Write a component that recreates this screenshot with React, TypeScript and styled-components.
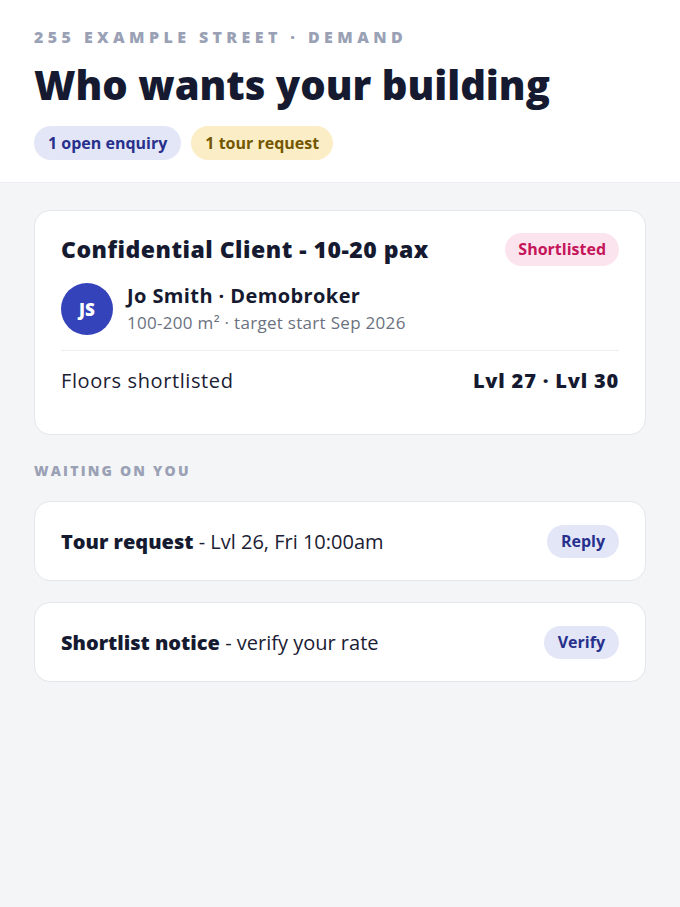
import React from 'react'
import styled, { createGlobalStyle } from 'styled-components'

const GlobalStyle = createGlobalStyle`
  html, body {
    margin: 0;
    padding: 0;
    background: #f4f5f7;
  }
  body {
    font-family: "Open Sans", "Noto Sans", sans-serif;
    color: #151a30;
  }
  * {
    box-sizing: border-box;
  }
`

const Page = styled.div`
  min-height: 907px;
  background: #f4f5f7;
`

const Header = styled.header`
  background: #ffffff;
  border-bottom: 1px solid #eceef2;
  padding: 27px 34px 22px;
`

const Eyebrow = styled.div`
  font-size: 16px;
  font-weight: 800;
  letter-spacing: 4.4px;
  color: #9aa1b5;
  line-height: 20px;
`

const Title = styled.h1`
  margin: 14px 0 0;
  font-size: 40px;
  font-weight: 800;
  line-height: 48px;
  color: #151a30;
`

const ChipRow = styled.div`
  display: flex;
  gap: 10px;
  margin-top: 17px;
`

const Chip = styled.span<{ $tone: 'blue' | 'amber' }>`
  display: inline-flex;
  align-items: center;
  height: 34px;
  padding: 0 14px;
  border-radius: 17px;
  font-size: 16px;
  font-weight: 700;
  background: ${p => (p.$tone === 'blue' ? '#e3e6f6' : '#fbeec6')};
  color: ${p => (p.$tone === 'blue' ? '#27308c' : '#735600')};
`

const Body = styled.main`
  padding: 27px 34px;
  display: flex;
  flex-direction: column;
`

const Card = styled.section`
  background: #ffffff;
  border: 1px solid #e4e6eb;
  border-radius: 16px;
  padding: 21px 26px 0;
`

const CardTop = styled.div`
  display: flex;
  align-items: center;
  justify-content: space-between;
`

const CardTitle = styled.h2`
  margin: 0;
  font-size: 23px;
  font-weight: 800;
  line-height: 34px;
  letter-spacing: 0.5px;
`

const Badge = styled.span`
  display: inline-flex;
  align-items: center;
  height: 33px;
  padding: 0 13px;
  border-radius: 17px;
  background: #fce4ee;
  color: #c4155a;
  font-size: 16px;
  font-weight: 700;
`

const Person = styled.div`
  display: flex;
  align-items: center;
  gap: 14px;
  margin-top: 17px;
`

const Avatar = styled.div`
  width: 52px;
  height: 52px;
  border-radius: 50%;
  background: #3443b9;
  color: #ffffff;
  display: flex;
  align-items: center;
  justify-content: center;
  font-size: 17px;
  font-weight: 800;
  flex-shrink: 0;
`

const PersonText = styled.div`
  display: flex;
  flex-direction: column;
  margin-top: -2px;
`

const PersonName = styled.div`
  font-size: 20px;
  font-weight: 700;
  line-height: 26px;
  letter-spacing: 0.4px;
`

const PersonMeta = styled.div`
  font-size: 17px;
  color: #6b7180;
  line-height: 22px;
  margin-top: 3px;
  letter-spacing: 0.3px;
`

const Divider = styled.hr`
  border: 0;
  border-top: 1px solid #eceef2;
  margin: 15px 0 0;
`

const FloorRow = styled.div`
  display: flex;
  justify-content: space-between;
  align-items: center;
  height: 58px;
  padding-bottom: 25px;
  box-sizing: content-box;
  font-size: 20px;
`

const FloorLabel = styled.span`
  font-weight: 400;
  color: #1b2033;
  letter-spacing: 0.6px;
`

const FloorValue = styled.span`
  font-weight: 800;
  letter-spacing: 0.8px;
`

const SectionLabel = styled.div`
  margin: 28px 0 22px;
  font-size: 14px;
  font-weight: 800;
  letter-spacing: 2.2px;
  color: #9aa1b5;
  line-height: 16px;
`

const TaskList = styled.div`
  display: flex;
  flex-direction: column;
  gap: 21px;
`

const TaskCard = styled.div`
  background: #ffffff;
  border: 1px solid #e4e6eb;
  border-radius: 16px;
  height: 80px;
  padding: 0 26px;
  display: flex;
  align-items: center;
  justify-content: space-between;
`

const TaskText = styled.div`
  font-size: 20px;
  color: #1b2033;
`

const TaskStrong = styled.strong`
  font-weight: 800;
  color: #151a30;
`

const ActionButton = styled.button`
  height: 33px;
  padding: 0 14px;
  border: 0;
  border-radius: 17px;
  background: #e3e6f6;
  color: #27308c;
  font-family: inherit;
  font-size: 16px;
  font-weight: 700;
  cursor: pointer;
`

const tasks = [
  { title: 'Tour request', detail: 'Lvl 26, Fri 10:00am', action: 'Reply' },
  { title: 'Shortlist notice', detail: 'verify your rate', action: 'Verify' },
]

export default function App() {
  return (
    <Page>
      <GlobalStyle />
      <Header>
        <Eyebrow>255 EXAMPLE STREET · DEMAND</Eyebrow>
        <Title>Who wants your building</Title>
        <ChipRow>
          <Chip $tone="blue">1 open enquiry</Chip>
          <Chip $tone="amber">1 tour request</Chip>
        </ChipRow>
      </Header>
      <Body>
        <Card>
          <CardTop>
            <CardTitle>Confidential Client - 10-20 pax</CardTitle>
            <Badge>Shortlisted</Badge>
          </CardTop>
          <Person>
            <Avatar>JS</Avatar>
            <PersonText>
              <PersonName>Jo Smith · Demobroker</PersonName>
              <PersonMeta>100-200 m² · target start Sep 2026</PersonMeta>
            </PersonText>
          </Person>
          <Divider />
          <FloorRow>
            <FloorLabel>Floors shortlisted</FloorLabel>
            <FloorValue>Lvl 27 · Lvl 30</FloorValue>
          </FloorRow>
        </Card>
        <SectionLabel>WAITING ON YOU</SectionLabel>
        <TaskList>
          {tasks.map(t => (
            <TaskCard key={t.title}>
              <TaskText>
                <TaskStrong>{t.title}</TaskStrong> - {t.detail}
              </TaskText>
              <ActionButton>{t.action}</ActionButton>
            </TaskCard>
          ))}
        </TaskList>
      </Body>
    </Page>
  )
}
